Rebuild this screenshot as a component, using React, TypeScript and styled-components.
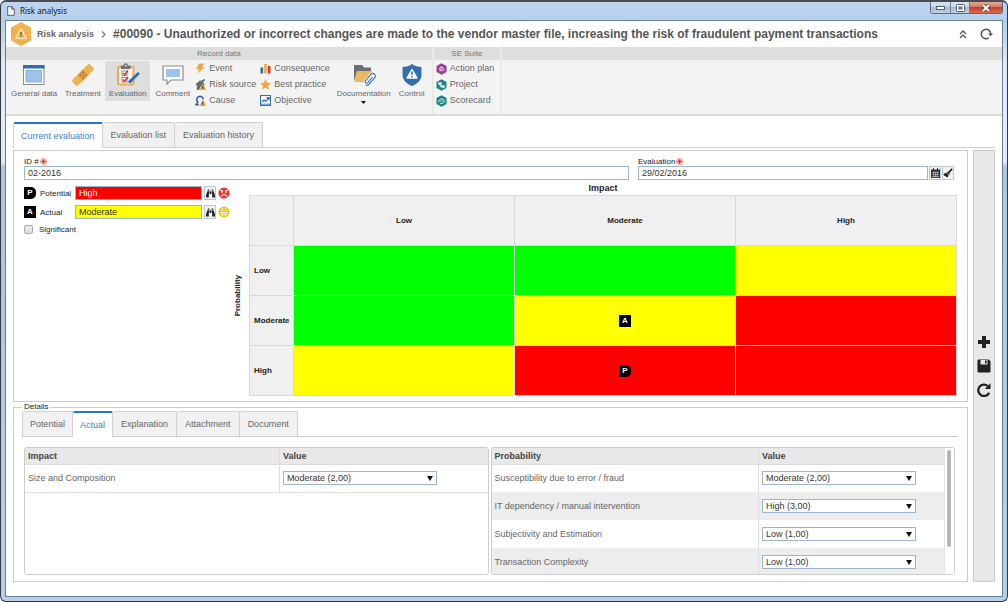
import React from "react";
import styled, { createGlobalStyle, css } from "styled-components";
import { FaBinoculars } from "react-icons/fa";

const Global = createGlobalStyle`
  * { box-sizing: border-box; }
  html, body { margin: 0; padding: 0; background: #fff; }
  body, button, input, select, table {
    font-family: "Liberation Sans", Arial, sans-serif;
    font-size: 9px;
    color: #666;
  }
  button { background: none; border: 0; padding: 0; margin: 0; cursor: pointer; }
  svg { display: block; flex: none; }
`;

/* ---------- window frame ---------- */

const Window = styled.div`
  min-height: 100vh;
  display: flex;
  flex-direction: column;
  padding: 0 4px 4px;
  border: 1px solid #34383e;
  border-top: 2px solid #4a4c52;
  border-radius: 6px;
  background: linear-gradient(180deg, #bdd5ee 0, #b4cfec 20px, #dce9f6 60px, #e3edf8 160px, #a9c6e6 165px, #b4cfec 100%);
`;

const TitleBar = styled.header`
  display: flex;
  justify-content: space-between;
  align-items: flex-start;
  height: 18px;
`;

const WindowTitle = styled.div`
  display: flex;
  align-items: center;
  gap: 5px;
  height: 17px;
  padding-left: 2px;
  font-family: "Noto Sans", sans-serif;
  font-size: 8px;
  color: #111;
`;

const WindowButtons = styled.div`
  display: flex;
  height: 12px;
  border: 1px solid #5d6c7d;
  border-top: 0;
  border-radius: 0 0 3px 3px;
  overflow: hidden;
`;

const WindowButton = styled.button<{ $close?: boolean }>`
  display: grid;
  place-items: center;
  width: ${(p) => (p.$close ? 33 : 19)}px;
  background: ${(p) =>
    p.$close
      ? "linear-gradient(#e3a597 0, #d67b68 45%, #c4402a 50%, #d8694c 100%)"
      : "linear-gradient(#d8e5f2 0, #c3d5e8 45%, #a3bbd4 50%, #bdd1e6 100%)"};
  & + & { border-left: 1px solid #6f8195; }
`;

const Content = styled.main`
  flex: 1;
  border: 1px solid #6d7f93;
  background: #fff;
`;

/* ---------- record heading ---------- */

const Heading = styled.div`
  display: flex;
  align-items: center;
  height: 26px;
  padding: 0 9px 0 4px;
  color: #555;
`;

const Crumb = styled.a`
  margin: 0 7px 0 5px;
  font-size: 9px;
  font-weight: bold;
  color: #666;
  text-decoration: none;
`;

const Title = styled.h1`
  flex: 1;
  margin: 0 0 0 7px;
  font-size: 12px;
  font-weight: bold;
  line-height: 14px;
  white-space: nowrap;
  color: #555;
`;

const HeadingActions = styled.div`
  display: flex;
  align-items: center;
  gap: 13px;
`;

/* ---------- ribbon ---------- */

const Ribbon = styled.nav`
  display: flex;
  background: #f3f3f3;
  border-bottom: 2px solid #dcdcdc;
`;

const Group = styled.section<{ $fill?: boolean }>`
  display: flex;
  flex-direction: column;
  ${(p) => (p.$fill ? "flex: 1;" : "border-right: 2px solid #e9e9e9;")}
`;

const GroupLabel = styled.h2`
  margin: 0;
  height: 13px;
  font-size: 8px;
  font-weight: normal;
  line-height: 13px;
  text-align: center;
  color: #777;
  background: #dedede;
`;

const GroupBody = styled.div`
  display: flex;
  align-items: flex-start;
  height: 54px;
  padding: 1px 2px 0;
`;

const BigButton = styled.button<{ $active?: boolean; $menu?: boolean; $slim?: boolean }>`
  display: flex;
  flex-direction: column;
  align-items: center;
  gap: 2px;
  min-width: ${(p) => (p.$slim ? 36 : 45)}px;
  height: ${(p) => (p.$menu ? 46 : 40)}px;
  padding: 2px 3px 0;
  font-size: 8px;
  line-height: 10px;
  white-space: nowrap;
  background: ${(p) => (p.$active ? "#dedede" : "transparent")};
`;

const IconBox = styled.span`
  display: grid;
  place-items: center;
  height: 24px;
`;

const SmallList = styled.div`
  display: flex;
  flex-direction: column;
  gap: 5px;
  padding: 2px 4px 0 0;
`;

const SmallButton = styled.button`
  display: flex;
  align-items: center;
  gap: 3px;
  height: 11px;
  line-height: 11px;
  white-space: nowrap;
`;

/* ---------- tabs ---------- */

const Tabs = styled.div`
  display: flex;
  align-items: flex-end;
  border-bottom: 1px solid #ccc;
`;

const Tab = styled.button<{ $active?: boolean }>`
  height: 25px;
  padding: 0 8px;
  border: 1px solid #d0d0d0;
  border-bottom: 0;
  border-left-width: 0;
  border-radius: 2px 2px 0 0;
  background: #f1f1f1;
  line-height: 23px;
  white-space: nowrap;
  &:first-child {
    padding: 0 7px;
    border-left-width: 1px;
  }
  ${(p) =>
    p.$active &&
    css`
      margin-bottom: -1px;
      height: 26px;
      padding: 0 7px;
      border-top: 2px solid #2277cc;
      background: #fff;
      color: #3a82cc;
    `}
`;

/* ---------- page body ---------- */

const Page = styled.div`
  padding: 6px 7px 14px;
`;

const Columns = styled.div`
  display: flex;
  gap: 5px;
  margin-top: 2px;
`;

const MainColumn = styled.div`
  flex: 1;
  min-width: 0;
  display: flex;
  flex-direction: column;
`;

const Panel = styled.section`
  padding: 6px 10px 5px;
  border: 1px solid #ccc;
`;

const SideBar = styled.aside`
  display: flex;
  flex-direction: column;
  align-items: center;
  justify-content: center;
  gap: 10px;
  width: 22px;
  border: 1px solid #ccc;
  background: #e8e8e8;
  color: #222;
`;

const FieldRow = styled.div`
  display: grid;
  grid-template-columns: minmax(0, 605fr) minmax(0, 316fr);
  gap: 9px;
  margin-right: 3px;
`;

const Field = styled.div`
  display: flex;
  flex-direction: column;
`;

const FieldLabel = styled.label`
  display: flex;
  align-items: center;
  gap: 1px;
  height: 9px;
  font-size: 8px;
  line-height: 9px;
  color: #222;
`;

const FieldLine = styled.div`
  display: flex;
  gap: 1px;
`;

const TextInput = styled.input<{ $fill?: string; $ink?: string }>`
  flex: 1;
  min-width: 0;
  width: 100%;
  height: 14px;
  padding: 0 3px;
  border: 1px solid #9cb6cd;
  border-radius: 0;
  background: ${(p) => p.$fill ?? "#fff"};
  color: ${(p) => p.$ink ?? "#333"};
  outline: 0;
`;

const ToolButton = styled.button`
  display: grid;
  place-items: center;
  flex: none;
  width: 12px;
  height: 14px;
  border: 1px solid #b5c8da;
  background: #f3f3f3;
  color: #222;
`;

const Assessment = styled.div`
  display: flex;
  margin-top: 3px;
`;

const Ratings = styled.div`
  display: flex;
  flex-direction: column;
  gap: 5px;
  width: 206px;
  padding-top: 3px;
`;

const RatingRow = styled.div`
  display: flex;
  align-items: center;
  gap: 2px;
  height: 14px;
`;

const RatingLabel = styled.label`
  width: 33px;
  margin-left: 2px;
  font-size: 8px;
  color: #222;
`;

const CheckRow = styled.label`
  display: flex;
  align-items: center;
  gap: 6px;
  height: 10px;
  font-size: 8px;
  color: #222;
  input {
    appearance: none;
    width: 9px;
    height: 9px;
    margin: 0;
    border: 1px solid #aaa;
    border-radius: 2px;
    background: linear-gradient(#eee, #ddd);
  }
`;

const Badge = styled.span<{ $round?: boolean }>`
  display: inline-grid;
  place-items: center;
  width: 12px;
  height: 12px;
  background: #000;
  color: #fff;
  font-size: 8px;
  font-weight: bold;
  line-height: 12px;
  border-radius: ${(p) => (p.$round ? "0 5px 5px 0" : "0")};
`;

const VerticalLabel = styled.div`
  display: grid;
  place-items: center;
  width: 15px;
  margin: 13px 4px 0 0;
  font-size: 8px;
  font-weight: bold;
  color: #222;
  span {
    writing-mode: vertical-rl;
    rotate: 180deg;
  }
`;

const MatrixArea = styled.div`
  flex: 1;
  min-width: 0;
`;

const Matrix = styled.table`
  width: 100%;
  table-layout: fixed;
  border-collapse: collapse;
  caption {
    height: 12px;
    font-size: 9px;
    line-height: 11px;
    font-weight: bold;
    color: #222;
  }
  th, td {
    height: 50px;
    padding: 0;
    border: 1px solid #ddd8d8;
    text-align: center;
    vertical-align: middle;
  }
  th {
    background: #f0f0f0;
    font-size: 8px;
    color: #222;
  }
  th[scope="row"] {
    padding-left: 4px;
    text-align: left;
  }
`;

const Corner = styled.td`
  width: 44px;
  background: #f0f0f0;
`;

const Cell = styled.td<{ $tone: Tone }>`
  background: ${(p) => toneColors[p.$tone]};
`;

const Details = styled.fieldset`
  min-width: 0;
  margin: 1px 0 0;
  padding: 0 9px 6px 8px;
  border: 1px solid #ccc;
  legend {
    height: 8px;
    margin: 0;
    padding: 0 2px;
    font-size: 8px;
    line-height: 8px;
    color: #222;
  }
`;

const Tables = styled.div`
  display: grid;
  grid-template-columns: minmax(0, 1fr) minmax(0, 1fr);
  gap: 2px;
  margin: 10px 3px 0 2px;
`;

const ScrollBox = styled.div`
  display: flex;
  height: 128px;
  overflow: hidden;
  border: 1px solid #ccc;
  border-radius: 3px;
`;

const FactorTable = styled.table<{ $split: number }>`
  flex: 1;
  align-self: flex-start;
  min-width: 0;
  table-layout: fixed;
  border-collapse: collapse;
  th {
    width: ${(p) => 100 - p.$split}%;
    height: 16px;
    padding: 0 3px;
    border-bottom: 1px solid #ddd;
    background: #e8e8e8;
    text-align: left;
    color: #444;
  }
  th:first-child { width: ${(p) => p.$split}%; }
  td {
    height: 28px;
    padding: 0 3px;
  }
  th + th, td + td { border-left: 1px solid #ddd; }
`;

const FactorRow = styled.tr<{ $shaded?: boolean; $ruled?: boolean }>`
  background: ${(p) => (p.$shaded ? "#ededed" : "#fff")};
  td { border-bottom: ${(p) => (p.$ruled ? "1px solid #ddd" : "0")}; }
`;

const ScrollTrack = styled.div`
  width: 10px;
  padding: 2px;
  background: #fff;
  border-left: 1px solid #e4e4e4;
`;

const ScrollThumb = styled.div`
  width: 4px;
  height: 97px;
  border-radius: 2px;
  background: #b5b5b5;
`;

const SelectBox = styled.span`
  display: grid;
  align-items: center;
  width: 154px;
  select, svg { grid-area: 1 / 1; }
  svg {
    justify-self: end;
    margin-right: 4px;
    pointer-events: none;
  }
  select {
    appearance: none;
    height: 14px;
    padding: 0 3px;
    border: 1px solid #9cb6cd;
    border-radius: 0;
    background: #fff;
    color: #333;
    outline: 0;
  }
`;

/* ---------- icons ---------- */

const RiskHexIcon = () => (
  <svg width="22" height="24" viewBox="0 0 22 24">
    <path d="M11 1 20 6.2V17.8L11 23 2 17.8V6.2z" fill="#f3b04c" stroke="#f3b04c" strokeWidth="2" strokeLinejoin="round" />
    <path d="M11 7 16.3 16.2H5.7z" fill="none" stroke="#fff3d8" strokeWidth="1.3" strokeLinejoin="round" />
    <path d="M11 10v3M11 14v1.200" stroke="#6b5020" strokeWidth="1.3" />
  </svg>
);

const FormIcon = () => (
  <svg width="22" height="20" viewBox="0 0 22 20">
    <rect x=".5" y=".5" width="20.500" height="19" fill="#fff" stroke="#8a8a8a" strokeWidth="1" />
    <rect x="0" y="0" width="21.500" height="3.500" fill="#2b6cb5" />
    <rect x="3" y="5.500" width="15.500" height="11.500" fill="#9fc3e6" stroke="#7ba7d1" strokeWidth=".8" />
  </svg>
);

const BandageIcon = () => (
  <svg width="24" height="24" viewBox="0 0 24 24">
    <g transform="rotate(-45 12 12)">
      <rect x="-.5" y="8" width="25" height="8" rx="2" fill="#eeb153" />
      <rect x="8" y="8" width="8" height="8" fill="#dda145" />
      <g fill="#8a6529">
        <circle cx="10" cy="10" r=".7" /><circle cx="14" cy="10" r=".7" /><circle cx="12" cy="12" r=".7" />
        <circle cx="10" cy="14" r=".7" /><circle cx="14" cy="14" r=".7" />
      </g>
    </g>
  </svg>
);

const ClipboardIcon = () => (
  <svg width="24" height="24" viewBox="0 0 24 24">
    <rect x="2" y="4" width="15.500" height="17.500" rx="1" fill="#f4f4f4" stroke="#eeaa49" strokeWidth="2" />
    <path d="M5 2.500h2.500a2.200 2.200 0 0 1 4.400 0H14.500v3.500H5z" fill="#6c7177" />
    <circle cx="9.700" cy="2.800" r="1" fill="#ddd" />
    <rect x="6" y="8" width="5" height="4.500" fill="#fff" stroke="#777" strokeWidth=".8" />
    <rect x="6" y="14.500" width="5" height="4.500" fill="#fff" stroke="#777" strokeWidth=".8" />
    <path d="m7 10 1.700 1.700 3.300-4.200M7 16.500l1.700 1.700 3.300-4.200" fill="none" stroke="#dd3322" strokeWidth="1.500" />
    <path d="m22 9 1.900 1.700-9 9.200-3.700 1.900 1.100-3.800z" fill="#2f6fb8" />
    <path d="m12.200 19 1.900 1.700-3.500 1.800z" fill="#d6e2ef" />
  </svg>
);

const CommentIcon = () => (
  <svg width="22" height="20" viewBox="0 0 22 20">
    <path d="M1 1h20v14H9l-4 4v-4H1z" fill="#fff" stroke="#8c8c8c" strokeWidth="1.200" />
    <rect x="4" y="4" width="14" height="8" fill="#9dc3e8" />
  </svg>
);

const FolderClipIcon = () => (
  <svg width="24" height="24" viewBox="0 0 24 24">
    <path d="M2 2h8l2 2.500h7V8H2z" fill="#6b6e72" />
    <path d="M2 3v15l3-9h14V5H2z" fill="#6b6e72" />
    <path d="M5 8h15l-2.200 11H2.500z" fill="#efb55f" />
    <path d="m20.500 14-4.600 5.600a1.500 1.500 0 0 1-2.400-2l5.400-6.300a2.500 2.500 0 0 1 3.900 3.300l-5.600 6.500a3.300 3.300 0 0 1-3.600 1" fill="none" stroke="#fff" strokeWidth="2.600" />
    <path d="m20.500 14-4.600 5.600a1.500 1.500 0 0 1-2.400-2l5.400-6.300a2.500 2.500 0 0 1 3.900 3.300l-5.600 6.500a3.300 3.300 0 0 1-3.600 1" fill="none" stroke="#2d6db5" strokeWidth="1.100" />
  </svg>
);

const ShieldIcon = () => (
  <svg width="22" height="24" viewBox="0 0 22 24">
    <path d="M11 1c3 2.300 6 3 9.500 3v7.500C20.500 17.500 16 21 11 23 6 21 1.500 17.500 1.500 11.500V4C5 4 8 3.300 11 1z" fill="#336fae" />
    <path d="m11 6.500 5 8.500H6z" fill="#fff" stroke="#fff" strokeWidth="1.400" strokeLinejoin="round" />
    <path d="M11 8.500v3.500M11 13v1.500" stroke="#336fae" strokeWidth="1.500" />
  </svg>
);

const BoltIcon = () => (
  <svg width="11" height="11" viewBox="0 0 11 11">
    <path d="M4 .5h5.500L7 4h3L2 10.800 4.200 6.300H1z" fill="#eda93f" />
  </svg>
);

const WarnMark = () => (
  <>
    <path d="M7.800 5 11 10.800H4.600z" fill="#f0a53a" stroke="#f0a53a" strokeWidth=".5" strokeLinejoin="round" />
    <path d="M7.800 6.800v2M7.800 9.300v.9" stroke="#2c1d05" strokeWidth="1" />
  </>
);

const SourceIcon = () => (
  <svg width="11" height="11" viewBox="0 0 11 11">
    <path d="M.3 5.500 5 1.200l1.500 1.300V1h2v3.300L10 5.600 6 7l-2 4H1.800V6z" fill="#666b70" />
    <circle cx="9" cy="1" r="1" fill="#3d79bb" />
    <WarnMark />
  </svg>
);

const CauseIcon = () => (
  <svg width="11" height="11" viewBox="0 0 11 11">
    <path d="M3 7.300A3.300 3.300 0 1 1 8.300 4.500M3.300 7 .8 9.800h3" fill="none" stroke="#2a66ae" strokeWidth="1.600" />
    <WarnMark />
  </svg>
);

const BarsIcon = () => (
  <svg width="11" height="11" viewBox="0 0 11 11">
    <rect x=".5" y="4.500" width="2.600" height="6" fill="#2f6cb0" />
    <rect x="4.200" y="1" width="2.600" height="9.500" fill="#eda93f" />
    <rect x="7.900" y="3" width="2.600" height="7.500" fill="#c93a2c" />
  </svg>
);

const StarIcon = () => (
  <svg width="11" height="11" viewBox="0 0 11 11">
    <path d="m5.500.1 1.600 3.600 3.900.4-2.900 2.600.9 4-3.500-2.100-3.500 2.100.9-4L0 4.100l3.900-.4z" fill="#eda93f" />
  </svg>
);

const ObjectiveIcon = () => (
  <svg width="11" height="11" viewBox="0 0 11 11">
    <rect x=".5" y=".5" width="10" height="10" fill="#fff" stroke="#2f6cb0" />
    <path d="M1 8.500h9V10H1z" fill="#7aa7d6" />
    <path d="m2 7 2-2 1.500 1.500L8.800 3M6.500 2.700h2.600v2.500" fill="none" stroke="#2f6cb0" strokeWidth="1.200" />
  </svg>
);

const HexIcon = ({ color, children }: { color: string; children: React.ReactNode }) => (
  <svg width="11" height="12" viewBox="0 0 11 12">
    <path d="M5.500.3 10.500 3v6L5.500 11.700.5 9V3z" fill={color} />
    {children}
  </svg>
);

const PageIcon = () => (
  <svg width="8" height="10" viewBox="0 0 8 10">
    <path d="M.7.600h4.100l2.500 2.600v6.200H.7zM4.800.6v2.600h2.500" fill="#f6f6f6" stroke="#555" strokeWidth=".9" />
  </svg>
);

const RequiredIcon = () => (
  <svg width="7" height="7" viewBox="0 0 7 7">
    <circle cx="3.500" cy="3.500" r="3" fill="#fff" stroke="#ea7a6c" strokeWidth=".8" />
    <path d="M3.500 1.200v4.600M1.200 3.500h4.600" stroke="#dc2a1c" strokeWidth="1.200" />
    <path d="m2 2 3 3M5 2 2 5" stroke="#e4584a" strokeWidth=".7" />
  </svg>
);

const CalendarIcon = () => (
  <svg width="9" height="10" viewBox="0 0 9 10">
    <path d="M0 1.500h9V10H0zM2 0h1v2H2zM6 0h1v2H6z" fill="#333" />
    <path d="M1 4.500h7M1 6.500h7M1 8.500h7M2.700 3.500V9.500M4.500 3.500V9.500M6.300 3.500V9.500" stroke="#ccc" strokeWidth=".6" />
  </svg>
);

const BrushIcon = () => (
  <svg width="10" height="10" viewBox="0 0 10 10">
    <path d="M8.600.3 9.700 1.400 6.500 5 5.200 3.800zM4.800 3.600 7 5.800 6.200 6.700 3.800 4.400zM3.400 4.800 5.700 7 4.500 9.700 3.600 8.800 2.800 8.900 2.500 7.900 1.200 7.700.4 6z" fill="#222" />
  </svg>
);

const FaceIcon = ({ color, sad }: { color: string; sad?: boolean }) => (
  <svg width="12" height="12" viewBox="0 0 12 12">
    <circle cx="6" cy="6" r="5.600" fill={color} />
    {sad ? (
      <path d="M2 3 5 4.200M10 3 7 4.200M3.200 5.300h1.500M7.300 5.300h1.500M3 9.300Q6 5.800 9 9.300" fill="none" stroke="#fff" strokeWidth="1.100" />
    ) : (
      <path d="M4.300 2.300v2.400M7.700 2.300v2.400M2.300 6.600h7.400M3 8.700h6" fill="none" stroke="#fff" strokeWidth="1.100" />
    )}
  </svg>
);

const ChevronsUp = () => (
  <svg width="8" height="9" viewBox="0 0 8 9">
    <path d="m1 4 3-3 3 3M1 8l3-3 3 3" fill="none" stroke="#555" strokeWidth="1.300" />
  </svg>
);

const RefreshIcon = () => (
  <svg width="13" height="12" viewBox="0 0 13 12">
    <path d="M8.800 9.800A4.700 4.700 0 1 1 10.700 6" fill="none" stroke="#555" strokeWidth="1.500" />
    <path d="M8 5.500h5L10.500 8.300z" fill="#555" />
  </svg>
);

const PlusIcon = () => (
  <svg width="14" height="14" viewBox="0 0 14 14">
    <path d="M5 1h4v4h4v4H9v4H5V9H1V5h4z" fill="#222" />
  </svg>
);

const SaveIcon = () => (
  <svg width="14" height="14" viewBox="0 0 14 14">
    <path d="M1.500.5h10.300l1.700 1.700v10.300a1 1 0 0 1-1 1h-11a1 1 0 0 1-1-1v-11a1 1 0 0 1 1-1z" fill="#222" />
    <path d="M3.500 1h7v4.500h-7z" fill="#e8e8e8" />
    <path d="M8 1.500h1.600v3H8z" fill="#222" />
  </svg>
);

const ReloadIcon = () => (
  <svg width="14" height="14" viewBox="0 0 14 14">
    <path d="M12.200 9.700A5.700 5.700 0 1 1 10.800 3" fill="none" stroke="#222" strokeWidth="2.300" />
    <path d="M13.500.2v5.800H7.800z" fill="#222" />
  </svg>
);

const ArrowDown = () => (
  <svg width="6" height="5" viewBox="0 0 6 5">
    <path d="M0 0h6L3 5z" fill="#111" />
  </svg>
);

const Caret = () => (
  <svg width="5" height="3" viewBox="0 0 5 3">
    <path d="M0 0h5L2.500 3z" fill="#111" />
  </svg>
);

/* ---------- data ---------- */

type Tone = "low" | "medium" | "high";
const toneColors: Record<Tone, string> = { low: "#00ff00", medium: "#ffff00", high: "#ff0000" };

const levels = ["Low", "Moderate", "High"];
const matrix: { tone: Tone; mark?: "A" | "P" }[][] = [
  [{ tone: "low" }, { tone: "low" }, { tone: "medium" }],
  [{ tone: "low" }, { tone: "medium", mark: "A" }, { tone: "high" }],
  [{ tone: "medium" }, { tone: "high", mark: "P" }, { tone: "high" }],
];

const options = ["Low (1,00)", "Moderate (2,00)", "High (3,00)"];
const impacts = [["Size and Composition", "Moderate (2,00)"]];
const probabilities = [
  ["Susceptibility due to error / fraud", "Moderate (2,00)"],
  ["IT dependency / manual intervention", "High (3,00)"],
  ["Subjectivity and Estimation", "Low (1,00)"],
  ["Transaction Complexity", "Low (1,00)"],
];

const Factors = ({ title, rows, split, ruled }: { title: string; rows: string[][]; split: number; ruled?: boolean }) => (
  <FactorTable $split={split}>
    <thead>
      <tr>
        <th scope="col">{title}</th>
        <th scope="col">Value</th>
      </tr>
    </thead>
    <tbody>
      {rows.map(([name, value], i) => (
        <FactorRow key={name} $shaded={i % 2 === 1} $ruled={ruled}>
          <td><label htmlFor={`${title}-${i}`}>{name}</label></td>
          <td>
            <SelectBox>
              <select id={`${title}-${i}`} defaultValue={value}>
                {options.map((o) => <option key={o}>{o}</option>)}
              </select>
              <ArrowDown />
            </SelectBox>
          </td>
        </FactorRow>
      ))}
    </tbody>
  </FactorTable>
);

export default function App() {
  return (
    <>
      <Global />
      <Window>
        <TitleBar>
          <WindowTitle><PageIcon />Risk analysis</WindowTitle>
          <WindowButtons>
            <WindowButton aria-label="Minimize">
              <svg width="9" height="4"><rect x=".5" y=".5" width="8" height="3" fill="#fff" stroke="#555f6b" /></svg>
            </WindowButton>
            <WindowButton aria-label="Restore">
              <svg width="9" height="8"><rect x=".5" y=".5" width="8" height="7" rx="1" fill="#fff" stroke="#555f6b" /><rect x="3" y="3" width="3" height="2" fill="#aabccd" stroke="#555f6b" /></svg>
            </WindowButton>
            <WindowButton $close aria-label="Close">
              <svg width="10" height="8" viewBox="0 0 10 8"><path d="m2 1 6 6M8 1 2 7" stroke="#5a3a3a" strokeWidth="3.400" /><path d="m2 1 6 6M8 1 2 7" stroke="#fff" strokeWidth="2" /></svg>
            </WindowButton>
          </WindowButtons>
        </TitleBar>

        <Content>
          <Heading>
            <RiskHexIcon />
            <Crumb href="#">Risk analysis</Crumb>
            <svg width="5" height="7" viewBox="0 0 5 7"><path d="m1 .5 3 3-3 3" fill="none" stroke="#777" strokeWidth="1.200" /></svg>
            <Title>#00090 - Unauthorized or incorrect changes are made to the vendor master file, increasing the risk of fraudulent payment transactions</Title>
            <HeadingActions>
              <button aria-label="Collapse"><ChevronsUp /></button>
              <button aria-label="Refresh"><RefreshIcon /></button>
            </HeadingActions>
          </Heading>

          <Ribbon>
            <Group>
              <GroupLabel>Record data</GroupLabel>
              <GroupBody>
                <BigButton><IconBox><FormIcon /></IconBox>General data</BigButton>
                <BigButton><IconBox><BandageIcon /></IconBox>Treatment</BigButton>
                <BigButton $active><IconBox><ClipboardIcon /></IconBox>Evaluation</BigButton>
                <BigButton><IconBox><CommentIcon /></IconBox>Comment</BigButton>
                <SmallList>
                  <SmallButton><BoltIcon />Event</SmallButton>
                  <SmallButton><SourceIcon />Risk source</SmallButton>
                  <SmallButton><CauseIcon />Cause</SmallButton>
                </SmallList>
                <SmallList>
                  <SmallButton><BarsIcon />Consequence</SmallButton>
                  <SmallButton><StarIcon />Best practice</SmallButton>
                  <SmallButton><ObjectiveIcon />Objective</SmallButton>
                </SmallList>
                <BigButton $menu><IconBox><FolderClipIcon /></IconBox>Documentation<Caret /></BigButton>
                <BigButton $slim><IconBox><ShieldIcon /></IconBox>Control</BigButton>
              </GroupBody>
            </Group>
            <Group>
              <GroupLabel>SE Suite</GroupLabel>
              <GroupBody>
                <SmallList>
                  <SmallButton>
                    <HexIcon color="#963f93"><path d="m5.500 3 2.700 1.500v3L5.500 9 2.800 7.500v-3zM5.500 6v3M5.500 6l2.700-1.500M5.500 6 2.800 4.500" fill="#e6cbe5" stroke="#963f93" strokeWidth=".7" /></HexIcon>
                    Action plan
                  </SmallButton>
                  <SmallButton>
                    <HexIcon color="#168486"><path d="M2.500 3.500h3v2h-3zM5.500 6.500h3v2h-3zM4 5.500v2h1.500" fill="#e5f5f5" stroke="#e5f5f5" strokeWidth=".5" /></HexIcon>
                    Project
                  </SmallButton>
                  <SmallButton>
                    <HexIcon color="#168486"><path d="M2.800 7.500a3 3 0 0 1 4-3.500M8.200 5a3 3 0 0 1-4 3.500M4.500 7 7.500 4" fill="none" stroke="#e5f5f5" strokeWidth="1" /></HexIcon>
                    Scorecard
                  </SmallButton>
                </SmallList>
              </GroupBody>
            </Group>
            <Group $fill><GroupLabel /></Group>
          </Ribbon>

          <Page>
            <Tabs>
              <Tab $active>Current evaluation</Tab>
              <Tab>Evaluation list</Tab>
              <Tab>Evaluation history</Tab>
            </Tabs>

            <Columns>
              <MainColumn>
                <Panel>
                  <FieldRow>
                    <Field>
                      <FieldLabel htmlFor="record-id">ID #<RequiredIcon /></FieldLabel>
                      <TextInput id="record-id" defaultValue="02-2016" />
                    </Field>
                    <Field>
                      <FieldLabel htmlFor="evaluation-date">Evaluation<RequiredIcon /></FieldLabel>
                      <FieldLine>
                        <TextInput id="evaluation-date" defaultValue="29/02/2016" />
                        <ToolButton aria-label="Pick a date"><CalendarIcon /></ToolButton>
                        <ToolButton aria-label="Clear date"><BrushIcon /></ToolButton>
                      </FieldLine>
                    </Field>
                  </FieldRow>

                  <Assessment>
                    <Ratings>
                      <RatingRow>
                        <Badge $round>P</Badge>
                        <RatingLabel htmlFor="potential">Potential</RatingLabel>
                        <TextInput id="potential" defaultValue="High" $fill="#ff0000" $ink="#fff" />
                        <ToolButton aria-label="Find potential"><FaBinoculars size={9} /></ToolButton>
                        <FaceIcon color="#f5332c" sad />
                      </RatingRow>
                      <RatingRow>
                        <Badge>A</Badge>
                        <RatingLabel htmlFor="actual">Actual</RatingLabel>
                        <TextInput id="actual" defaultValue="Moderate" $fill="#ffff00" />
                        <ToolButton aria-label="Find actual"><FaBinoculars size={9} /></ToolButton>
                        <FaceIcon color="#efc414" />
                      </RatingRow>
                      <CheckRow><input type="checkbox" />Significant</CheckRow>
                    </Ratings>
                    <VerticalLabel><span>Probability</span></VerticalLabel>
                    <MatrixArea>
                      <Matrix>
                        <caption>Impact</caption>
                        <tbody>
                          <tr>
                            <Corner />
                            {levels.map((l) => <th key={l} scope="col">{l}</th>)}
                          </tr>
                          {matrix.map((row, r) => (
                            <tr key={levels[r]}>
                              <th scope="row">{levels[r]}</th>
                              {row.map((c, i) => (
                                <Cell key={i} $tone={c.tone}>
                                  {c.mark && <Badge $round={c.mark === "P"}>{c.mark}</Badge>}
                                </Cell>
                              ))}
                            </tr>
                          ))}
                        </tbody>
                      </Matrix>
                    </MatrixArea>
                  </Assessment>
                </Panel>

                <Details>
                  <legend>Details</legend>
                  <Tabs>
                    <Tab>Potential</Tab>
                    <Tab $active>Actual</Tab>
                    <Tab>Explanation</Tab>
                    <Tab>Attachment</Tab>
                    <Tab>Document</Tab>
                  </Tabs>
                  <Tables>
                    <ScrollBox>
                      <Factors title="Impact" rows={impacts} split={55} ruled />
                    </ScrollBox>
                    <ScrollBox>
                      <Factors title="Probability" rows={probabilities} split={59} />
                      <ScrollTrack><ScrollThumb /></ScrollTrack>
                    </ScrollBox>
                  </Tables>
                </Details>
              </MainColumn>

              <SideBar>
                <button aria-label="Add"><PlusIcon /></button>
                <button aria-label="Save"><SaveIcon /></button>
                <button aria-label="Reload"><ReloadIcon /></button>
              </SideBar>
            </Columns>
          </Page>
        </Content>
      </Window>
    </>
  );
}
